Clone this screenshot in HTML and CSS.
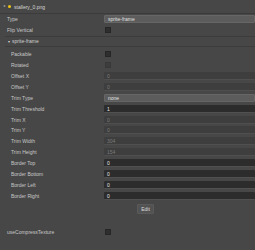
FILE: index.html
```html
<!DOCTYPE html>
<html>
<head>
    <title>Inspector</title>
    <link rel="stylesheet" href="styles.css">
</head>
<body>
    <div id="inspector">
        <div class="asset-header">
            <span class="fold">&#9662;</span>
            <span class="dot"></span>
            <span class="asset-name">stallery_0.png</span>
        </div>

        <div class="props">
            <div class="prop">
                <span class="label">Type</span>
                <div class="field select">sprite-frame</div>
            </div>
            <div class="prop">
                <span class="label">Flip Vertical</span>
                <span class="check"></span>
            </div>
        </div>

        <div class="section-head">
            <span class="arrow">&#9662;</span> sprite-frame
        </div>

        <div class="props nested">
            <div class="prop">
                <span class="label">Packable</span>
                <span class="check"></span>
            </div>
            <div class="prop">
                <span class="label">Rotated</span>
                <span class="check off"></span>
            </div>
            <div class="prop">
                <span class="label">Offset X</span>
                <div class="field disabled">0</div>
            </div>
            <div class="prop">
                <span class="label">Offset Y</span>
                <div class="field disabled">0</div>
            </div>
            <div class="prop">
                <span class="label">Trim Type</span>
                <div class="field select">none</div>
            </div>
            <div class="prop">
                <span class="label">Trim Threshold</span>
                <div class="field num">1</div>
            </div>
            <div class="prop">
                <span class="label">Trim X</span>
                <div class="field disabled">0</div>
            </div>
            <div class="prop">
                <span class="label">Trim Y</span>
                <div class="field disabled">0</div>
            </div>
            <div class="prop">
                <span class="label">Trim Width</span>
                <div class="field disabled">304</div>
            </div>
            <div class="prop">
                <span class="label">Trim Height</span>
                <div class="field disabled">154</div>
            </div>
            <div class="prop">
                <span class="label">Border Top</span>
                <div class="field num">0</div>
            </div>
            <div class="prop">
                <span class="label">Border Bottom</span>
                <div class="field num">0</div>
            </div>
            <div class="prop">
                <span class="label">Border Left</span>
                <div class="field num">0</div>
            </div>
            <div class="prop">
                <span class="label">Border Right</span>
                <div class="field num">0</div>
            </div>
            <div class="edit-row">
                <button class="edit-btn">Edit</button>
            </div>
        </div>

        <div class="props bottom">
            <div class="prop">
                <span class="label">useCompressTexture</span>
                <span class="check"></span>
            </div>
        </div>
    </div>
</body>
</html>
```

FILE: styles.css
```css
body {
    margin: 0;
    padding: 0;
    background-color: #474747;
    font-family: "Liberation Sans", Arial, sans-serif;
    font-size: 5px;
    color: #c8c8c8;
    overflow: hidden;
}

#inspector {
    width: 255px;
    height: 250px;
}

.asset-header {
    display: flex;
    align-items: center;
    height: 13px;
    padding-left: 2px;
    border-bottom: 1px solid #3b3b3b;
}

.fold {
    font-size: 4px;
    color: #aaa;
    transform: rotate(90deg);
    width: 4px;
}

.dot {
    width: 3px;
    height: 3px;
    border-radius: 50%;
    background-color: #f2c811;
    margin-left: 2px;
    margin-right: 3px;
}

.asset-name {
    color: #d6d6d6;
}

.props {
    padding-left: 7px;
}

.prop {
    display: flex;
    align-items: center;
    height: 10.9px;
}

.label {
    width: 97px;
    flex-shrink: 0;
    white-space: nowrap;
}

.nested {
    padding-left: 11px;
    padding-top: 2px;
}

.nested .label {
    width: 93px;
}

.field {
    flex: 1;
    height: 8px;
    line-height: 8px;
    padding-left: 3px;
    box-sizing: border-box;
    border-radius: 1px;
}

.select {
    background-color: #5c5c5c;
    border: 1px solid #666;
    line-height: 6px;
    color: #e0e0e0;
}

.disabled {
    background-color: #3e3e3e;
    border-bottom: 1px solid #4f4f4f;
    color: #7a7a7a;
}

.num {
    background-color: #2c2c2c;
    border-bottom: 1px solid #505050;
    color: #e6e6e6;
}

.check {
    width: 4px;
    height: 4px;
    margin-left: 1px;
    background-color: #2e2e2e;
    border: 1px solid #262626;
}

.check.off {
    background-color: #3d3d3d;
    border-color: #383838;
}

.section-head {
    display: flex;
    align-items: center;
    height: 9px;
    margin-left: 5px;
    padding-left: 3px;
    border-top: 1px solid #3c3c3c;
    border-bottom: 1px solid #3c3c3c;
    color: #d0d0d0;
}

.arrow {
    font-size: 4px;
    margin-right: 2px;
}

.edit-row {
    padding-top: 3px;
    padding-left: 126px;
}

.edit-btn {
    font-family: "Liberation Sans", Arial, sans-serif;
    font-size: 5px;
    width: 17px;
    height: 10px;
    padding: 0;
    background-color: #525252;
    color: #ddd;
    border: 1px solid #5a5a5a;
    border-radius: 1px;
}

.bottom {
    padding-top: 12px;
}
```
